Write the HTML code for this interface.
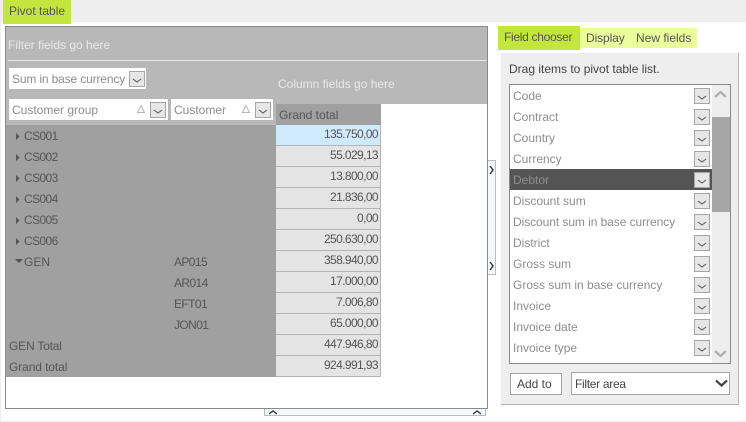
<!DOCTYPE html>
<html>
<head>
<meta charset="utf-8">
<style>
html,body{margin:0;padding:0;background:#fff}
body{width:746px;height:422px;position:relative;overflow:hidden;font:12px "Liberation Sans",sans-serif;color:#555}
.a{position:absolute;box-sizing:border-box}
.t{position:absolute;white-space:nowrap;line-height:16px;height:16px}
.n{letter-spacing:-.6px}
.dd{position:absolute;width:16px;height:16px;box-sizing:border-box;border:1px solid #a5a5a5;background:#e6e6e6}
.dd svg{position:absolute;left:2px;top:3px}
.cell{position:absolute;left:276px;width:105px;height:21px;box-sizing:border-box;background:#e4e4e4;border-bottom:1px solid #b4b4b4;border-right:1px solid #b4b4b4;text-align:right;padding-right:2px;line-height:19px;color:#555;letter-spacing:-.6px}
.h{color:#555}
.f{color:#8d8d8d}
.dots{background-image:radial-gradient(#d3e6ef .5px,transparent .6px);background-size:2px 2px}
</style>
</head>
<body>
<div class="a" style="left:0;top:0;width:746px;height:22px;background:#eee"></div>
<div class="a" style="left:0;top:421px;width:746px;height:1px;background:#eee"></div>
<div class="a" style="left:0;top:22px;width:1px;height:400px;background:#eee"></div>
<div class="a" style="left:3px;top:0;width:68px;height:24px;background:#c3e63f"></div>
<div class="t" style="left:9px;top:3px;color:#555">Pivot table</div>

<!-- pivot -->
<div class="a" style="left:5px;top:26px;width:483px;height:383px;border:1px solid #8a8a8a;background:#fff"></div>
<div class="a" style="left:6px;top:27px;width:481px;height:77px;background:#b8b8b8"></div>
<div class="a" style="left:6px;top:104px;width:270px;height:21px;background:#b8b8b8"></div>
<div class="a" style="left:8px;top:60px;width:479px;height:1px;background:#e6e6e6"></div>
<div class="t" style="left:8px;top:37px;color:#e8e8e8">Filter fields go here</div>
<div class="t" style="left:278px;top:76px;color:#e8e8e8">Column fields go here</div>

<div class="a" style="left:9px;top:68px;width:137px;height:21px;background:#fff"></div>
<div class="t f" style="left:12px;top:71px;letter-spacing:-.15px">Sum in base currency</div>
<div class="dd" style="left:129px;top:71px"><svg width="10" height="10"><path d="M1 4l4 3 4-3" fill="none" stroke="#555" stroke-width="1"/></svg></div>

<div class="a" style="left:9px;top:99px;width:159px;height:21px;background:#fff"></div>
<div class="t f" style="left:12px;top:102px">Customer group</div>
<svg class="a" style="left:136px;top:104px" width="10" height="10"><path d="M1.5 8.5h7L5 1.5z" fill="none" stroke="#b5b5b5"/></svg>
<div class="dd" style="left:150px;top:102px"><svg width="10" height="10"><path d="M1 4l4 3 4-3" fill="none" stroke="#555"/></svg></div>
<div class="a" style="left:171px;top:99px;width:102px;height:21px;background:#fff"></div>
<div class="t f" style="left:174px;top:102px">Customer</div>
<svg class="a" style="left:241px;top:104px" width="10" height="10"><path d="M1.5 8.5h7L5 1.5z" fill="none" stroke="#b5b5b5"/></svg>
<div class="dd" style="left:255px;top:102px"><svg width="10" height="10"><path d="M1 4l4 3 4-3" fill="none" stroke="#555"/></svg></div>

<div class="a" style="left:6px;top:125px;width:270px;height:252px;background:#a0a0a0"></div>
<div class="a" style="left:276px;top:104px;width:105px;height:21px;background:#a0a0a0"></div>
<div class="t h" style="left:279px;top:107px">Grand total</div>

<!-- row labels -->
<svg class="a" style="left:14px;top:131px" width="8" height="116"><path d="M2 2l3.500 3.500L2 9zM2 23l3.500 3.500L2 30zM2 44l3.500 3.500L2 51zM2 65l3.500 3.500L2 72zM2 86l3.500 3.500L2 93zM2 107l3.500 3.500L2 114z" fill="#555"/></svg>
<svg class="a" style="left:14px;top:259px" width="10" height="6"><path d="M1 0h8l-4 4z" fill="#555"/></svg>
<div class="t h n" style="left:24px;top:128px">CS001</div>
<div class="t h n" style="left:24px;top:149px">CS002</div>
<div class="t h n" style="left:24px;top:170px">CS003</div>
<div class="t h n" style="left:24px;top:191px">CS004</div>
<div class="t h n" style="left:24px;top:212px">CS005</div>
<div class="t h n" style="left:24px;top:233px">CS006</div>
<div class="t h" style="left:24px;top:254px">GEN</div>
<div class="t h n" style="left:174px;top:254px">AP015</div>
<div class="t h n" style="left:174px;top:275px">AR014</div>
<div class="t h n" style="left:174px;top:296px">EFT01</div>
<div class="t h n" style="left:174px;top:317px">JON01</div>
<div class="t h" style="left:9px;top:338px;letter-spacing:-.2px">GEN Total</div>
<div class="t h" style="left:9px;top:359px;letter-spacing:-.1px">Grand total</div>

<!-- values -->
<div class="cell" style="top:125px;background:#cfeafd">135.750,00</div>
<div class="cell" style="top:146px">55.029,13</div>
<div class="cell" style="top:167px">13.800,00</div>
<div class="cell" style="top:188px">21.836,00</div>
<div class="cell" style="top:209px">0,00</div>
<div class="cell" style="top:230px">250.630,00</div>
<div class="cell" style="top:251px">358.940,00</div>
<div class="cell" style="top:272px">17.000,00</div>
<div class="cell" style="top:293px">7.006,80</div>
<div class="cell" style="top:314px">65.000,00</div>
<div class="cell" style="top:335px">447.946,80</div>
<div class="cell" style="top:356px">924.991,93</div>

<!-- splitters -->
<div class="a dots" style="left:488px;top:160px;width:8px;height:115px;border:1px solid #bbb;border-left:0;background-color:#fff"></div>
<svg class="a" style="left:489px;top:166px" width="6" height="8"><path d="M1 0l3 4-3 4" fill="none" stroke="#333" stroke-width="1.400"/></svg>
<svg class="a" style="left:489px;top:262px" width="6" height="8"><path d="M1 0l3 4-3 4" fill="none" stroke="#333" stroke-width="1.400"/></svg>
<div class="a dots" style="left:264px;top:409px;width:222px;height:7px;border:1px solid #bbb;border-top:0;background-color:#fff"></div>
<svg class="a" style="left:269px;top:410px" width="8" height="5"><path d="M0 4l4-3 4 3" fill="none" stroke="#333" stroke-width="1.400"/></svg>
<svg class="a" style="left:473px;top:410px" width="8" height="5"><path d="M0 4l4-3 4 3" fill="none" stroke="#333" stroke-width="1.400"/></svg>

<!-- tabs -->
<div class="a" style="left:580px;top:28px;width:117px;height:20px;background:#eaff9c"></div>
<div class="a" style="left:498px;top:26px;width:82px;height:24px;background:#c3e63f"></div>
<div class="t" style="left:504px;top:29px;letter-spacing:-.3px">Field chooser</div>
<div class="t" style="left:586px;top:30px;letter-spacing:-.1px">Display</div>
<div class="t" style="left:636px;top:30px">New fields</div>

<!-- panel -->
<div class="a" style="left:501px;top:53px;width:238px;height:352px;background:#eee;border-right:1px solid #b4b4b4;border-bottom:1px solid #b4b4b4"></div>
<div class="t" style="left:509px;top:61px;color:#444">Drag items to pivot table list.</div>
<div class="a" style="left:509px;top:84px;width:222px;height:280px;background:#fff;border:1px solid #8a8a8a"></div>
<div class="a" style="left:712px;top:85px;width:18px;height:278px;background:#eee"></div>
<div class="a" style="left:712px;top:117px;width:18px;height:95px;background:#a5a5a5"></div>
<svg class="a" style="left:714px;top:90px" width="13" height="9"><path d="M1 7l5.500-5 5.500 5" fill="none" stroke="#b0b0b0" stroke-width="2.200"/></svg>
<svg class="a" style="left:714px;top:349px" width="13" height="9"><path d="M1 2l5.500 5 5.500-5" fill="none" stroke="#b0b0b0" stroke-width="2.200"/></svg>
<div class="a" style="left:510px;top:169px;width:202px;height:21px;background:#555"></div>

<div class="t f" style="left:513px;top:88px">Code</div>
<div class="t f" style="left:513px;top:109px">Contract</div>
<div class="t f" style="left:513px;top:130px">Country</div>
<div class="t f" style="left:513px;top:151px">Currency</div>
<div class="t f" style="left:513px;top:172px">Debtor</div>
<div class="t f" style="left:513px;top:193px">Discount sum</div>
<div class="t f" style="left:513px;top:214px;letter-spacing:-.07px">Discount sum in base currency</div>
<div class="t f" style="left:513px;top:235px">District</div>
<div class="t f" style="left:513px;top:256px">Gross sum</div>
<div class="t f" style="left:513px;top:277px">Gross sum in base currency</div>
<div class="t f" style="left:513px;top:298px">Invoice</div>
<div class="t f" style="left:513px;top:319px">Invoice date</div>
<div class="t f" style="left:513px;top:340px">Invoice type</div>

<div class="dd" style="left:694px;top:88px"><svg width="10" height="10"><path d="M1 4l4 3 4-3" fill="none" stroke="#555"/></svg></div>
<div class="dd" style="left:694px;top:109px"><svg width="10" height="10"><path d="M1 4l4 3 4-3" fill="none" stroke="#555"/></svg></div>
<div class="dd" style="left:694px;top:130px"><svg width="10" height="10"><path d="M1 4l4 3 4-3" fill="none" stroke="#555"/></svg></div>
<div class="dd" style="left:694px;top:151px"><svg width="10" height="10"><path d="M1 4l4 3 4-3" fill="none" stroke="#555"/></svg></div>
<div class="dd" style="left:694px;top:172px"><svg width="10" height="10"><path d="M1 4l4 3 4-3" fill="none" stroke="#555"/></svg></div>
<div class="dd" style="left:694px;top:193px"><svg width="10" height="10"><path d="M1 4l4 3 4-3" fill="none" stroke="#555"/></svg></div>
<div class="dd" style="left:694px;top:214px"><svg width="10" height="10"><path d="M1 4l4 3 4-3" fill="none" stroke="#555"/></svg></div>
<div class="dd" style="left:694px;top:235px"><svg width="10" height="10"><path d="M1 4l4 3 4-3" fill="none" stroke="#555"/></svg></div>
<div class="dd" style="left:694px;top:256px"><svg width="10" height="10"><path d="M1 4l4 3 4-3" fill="none" stroke="#555"/></svg></div>
<div class="dd" style="left:694px;top:277px"><svg width="10" height="10"><path d="M1 4l4 3 4-3" fill="none" stroke="#555"/></svg></div>
<div class="dd" style="left:694px;top:298px"><svg width="10" height="10"><path d="M1 4l4 3 4-3" fill="none" stroke="#555"/></svg></div>
<div class="dd" style="left:694px;top:319px"><svg width="10" height="10"><path d="M1 4l4 3 4-3" fill="none" stroke="#555"/></svg></div>
<div class="dd" style="left:694px;top:340px"><svg width="10" height="10"><path d="M1 4l4 3 4-3" fill="none" stroke="#555"/></svg></div>

<div class="a" style="left:510px;top:373px;width:52px;height:22px;background:#fff;border:1px solid #a5a5a5"></div>
<div class="t" style="left:517px;top:376px;color:#444">Add to</div>
<div class="a" style="left:571px;top:372px;width:159px;height:23px;background:#fff;border:1px solid #a5a5a5"></div>
<div class="t" style="left:575px;top:376px;color:#444;letter-spacing:-.3px">Filter area</div>
<svg class="a" style="left:715px;top:379px" width="13" height="9"><path d="M1 1.500l5.500 5 5.500-5" fill="none" stroke="#444" stroke-width="2.200"/></svg>
</body>
</html>
